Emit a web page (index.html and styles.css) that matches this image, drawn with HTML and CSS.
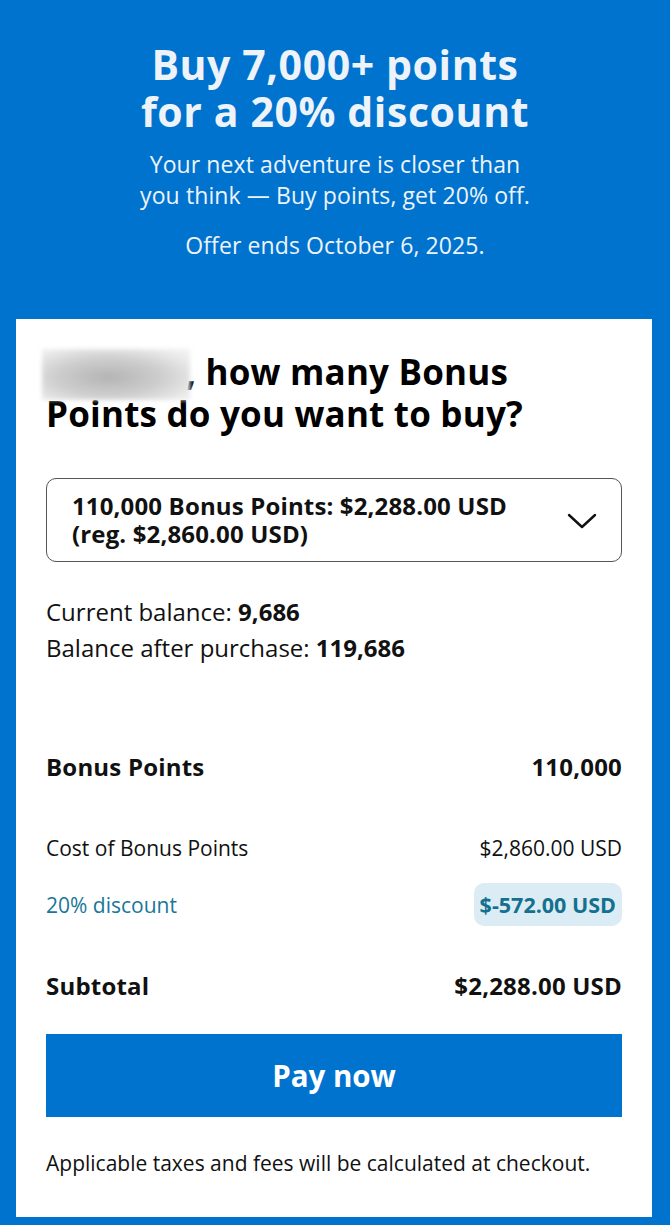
FILE: index.html
```html
<!DOCTYPE html>
<html lang="en">
<head>
<meta charset="utf-8">
<title>Buy points</title>
<link rel="stylesheet" href="styles.css">
</head>
<body>
<header class="hero">
  <h1 class="hero-title">Buy 7,000+ points<br>for a 20% discount</h1>
  <p class="hero-sub">Your next adventure is closer than<br>you think — Buy points, get 20% off.</p>
  <p class="hero-ends">Offer ends October 6, 2025.</p>
</header>
<main class="card">
  <h2 class="question"><span class="name-blur"></span>, how many Bonus<br>Points do you want to buy?</h2>
  <div class="select">
    <div class="select-text">110,000 Bonus Points: $2,288.00 USD<br>(reg. $2,860.00 USD)</div>
    <svg class="chevron" width="30" height="16" viewBox="0 0 30 16"><path d="M2 2 L15 14 L28 2" fill="none" stroke="#111" stroke-width="2.4" stroke-linecap="round" stroke-linejoin="round"/></svg>
  </div>
  <div class="balances">
    <div>Current balance: <b>9,686</b></div>
    <div>Balance after purchase: <b>119,686</b></div>
  </div>
  <div class="row row-strong row-points"><span>Bonus Points</span><span>110,000</span></div>
  <div class="row row-cost"><span>Cost of Bonus Points</span><span>$2,860.00 USD</span></div>
  <div class="row row-discount"><span>20% discount</span><span class="badge">$-572.00 USD</span></div>
  <div class="row row-strong row-subtotal"><span>Subtotal</span><span>$2,288.00 USD</span></div>
  <button class="pay">Pay now</button>
  <p class="note">Applicable taxes and fees will be calculated at checkout.</p>
</main>
</body>
</html>
```
FILE: styles.css
```css
* { box-sizing: border-box; }
html, body { margin: 0; padding: 0; }
body {
  background: #0073cf;
  font-family: "Open Sans", "Noto Sans", "Liberation Sans", sans-serif;
  color: #111;
  width: 670px;
  min-height: 1225px;
}
.hero {
  padding: 41px 10px 58px;
  text-align: center;
  color: #eef3f9;
}
.hero-title {
  margin: 0;
  font-size: 41px;
  line-height: 47px;
  font-weight: 700;
  letter-spacing: 0.6px;
}
.hero-sub {
  margin: 14px 0 0;
  font-size: 23px;
  line-height: 31px;
  letter-spacing: 0.1px;
}
.hero-ends {
  margin: 19px 0 0;
  font-size: 23px;
  line-height: 31px;
  letter-spacing: 0.1px;
}
.card {
  background: #fff;
  margin: 0 18px 8px 16px;
  padding: 32px 30px 40px;
  display: flex;
  flex-direction: column;
}
.question {
  margin: 0;
  font-size: 35px;
  line-height: 42px;
  font-weight: 700;
  color: #000;
  letter-spacing: 0.2px;
}
.name-blur {
  display: inline-block;
  width: 148px;
  height: 26px;
  margin-left: -4px;
  margin-right: -4px;
  vertical-align: -4px;
  position: relative;
  z-index: 1;
}
.name-blur::before {
  content: "";
  position: absolute;
  left: 0;
  right: 0;
  top: -14px;
  bottom: -11px;
  background: radial-gradient(ellipse at 45% 55%, #b4b4b4 0%, #cdcdcd 45%, #ebebeb 80%, #f4f4f4 100%);
  filter: blur(2px);
}
.select {
  margin-top: 43px;
  border: 1px solid #555;
  border-radius: 10px;
  padding: 13px 24px 13px 25px;
  display: flex;
  align-items: center;
  justify-content: space-between;
}
.select-text {
  font-size: 24px;
  line-height: 28px;
  font-weight: 700;
  letter-spacing: 0.15px;
}
.chevron { flex: none; margin-top: 2px; }
.balances {
  margin-top: 32px;
  font-size: 24px;
  line-height: 36px;
}
.row {
  display: flex;
  justify-content: space-between;
  align-items: center;
}
.row-strong {
  font-size: 24px;
  line-height: 30px;
  font-weight: 700;
  letter-spacing: 0.2px;
}
.row-points { margin-top: 86px; }
.row-cost {
  margin-top: 52px;
  font-size: 21px;
  line-height: 28px;
}
.row-discount {
  margin-top: 21px;
  font-size: 21px;
  color: #1a7796;
}
.badge {
  background: #dcecf4;
  border-radius: 10px;
  padding: 0 6px;
  height: 43px;
  line-height: 43px;
  font-weight: 700;
  font-size: 21.5px;
  color: #14708f;
}
.row-subtotal { margin-top: 45px; }
.pay {
  margin-top: 33px;
  height: 83px;
  border: 0;
  background: #0073cf;
  color: #fff;
  font-family: inherit;
  font-size: 29.5px;
  font-weight: 700;
  cursor: pointer;
}
.note {
  margin: 32px 0 0;
  font-size: 21px;
  line-height: 28px;
}
```
